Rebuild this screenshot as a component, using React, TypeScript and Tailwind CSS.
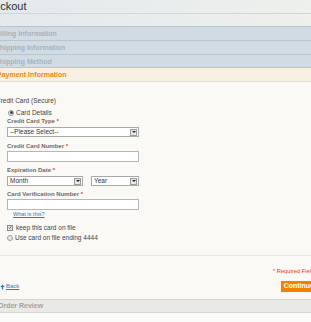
import React from "react";

// ─── Small form pieces ───────────────────────────────────────────────────────

function Label({ text }: { text: string }) {
  return (
    <div className="h-[9px] pl-[7px] text-[6px] font-bold leading-[9px] text-[#6b6b6b]">
      {text} <span className="text-[#eb340a]">*</span>
    </div>
  );
}

function SelectBox({ value, width }: { value: string; width: string }) {
  return (
    <div
      className={`flex h-[10px] items-center justify-between border border-[#a9a9a9] bg-white pl-[2px] pr-[1px] ${width}`}
    >
      <span className="text-[6.5px] leading-none text-[#333]">{value}</span>
      <span className="flex h-[7px] w-[7px] items-center justify-center border border-[#9a9a9a] bg-[#e8e8e8]">
        <span className="h-0 w-0 border-x-[2px] border-t-[2px] border-x-transparent border-t-[#222]" />
      </span>
    </div>
  );
}

function TextBox() {
  return <div className="ml-[7px] h-[11px] w-[132px] border border-[#b6b6b6] bg-white" />;
}

function Radio({ checked }: { checked?: boolean }) {
  return (
    <span className="flex h-[6px] w-[6px] items-center justify-center rounded-full border border-[#9a9a9a] bg-[#e9e9e9]">
      {checked && <span className="h-[3px] w-[3px] rounded-full bg-[#3d4a5a]" />}
    </span>
  );
}

function StepRow({ title, short }: { title: string; short?: boolean }) {
  return (
    <div
      className={`${short ? "h-[13px]" : "h-[14px]"} border-b border-[#b9c5cd] bg-[#d0dbe3] text-[7px] font-bold leading-[13px] text-[#a7b4bd]`}
    >
      <span className="-ml-[5px]">{title}</span>
    </div>
  );
}

// ─── Page ────────────────────────────────────────────────────────────────────

export default function App() {
  return (
    <div
      className="h-[322px] w-[311px] overflow-hidden bg-[#faf9f5]"
      style={{ fontFamily: '"Liberation Sans", Arial, sans-serif' }}
    >
      {/* Heading */}
      <div className="bg-gradient-to-r from-[#e3e9ec] to-[#eef0ec]">
        <div className="h-[14px] border-b border-[#cfd7db] text-[11px] leading-[13px] text-[#2f2f2f]">
          <span className="-ml-[20px]">Checkout</span>
        </div>
        <div className="h-[13px] border-b border-[#b9c5cd]" />
      </div>

      {/* Steps */}
      <StepRow title="Billing Information" />
      <StepRow title="Shipping Information" />
      <StepRow title="Shipping Method" short />
      <div className="h-[14px] border-b border-[#e3ddd2] bg-[#faf0e1] text-[7px] font-bold leading-[13px] text-[#f0841a]">
        <span className="-ml-[3px]">Payment Information</span>
      </div>

      {/* Payment form */}
      <div className="flex flex-col">
        <div className="mt-[14px] h-[9px] text-[6.5px] leading-[9px] text-[#444]">
          <span className="-ml-[4px]">Credit Card (Secure)</span>
        </div>

        <div className="mt-[3px] flex h-[9px] items-center gap-[2px] pl-[8px] text-[6.5px] text-[#444]">
          <Radio checked />
          <span>Card Details</span>
        </div>

        <Label text="Credit Card Type" />
        <div className="mt-[1px] pl-[7px]">
          <SelectBox value="--Please Select--" width="w-[132px]" />
        </div>

        <div className="mt-[5px]">
          <Label text="Credit Card Number" />
        </div>
        <TextBox />

        <div className="mt-[4px]">
          <Label text="Expiration Date" />
        </div>
        <div className="mt-[1px] flex gap-[8px] pl-[7px]">
          <SelectBox value="Month" width="w-[76px]" />
          <SelectBox value="Year" width="w-[48px]" />
        </div>

        <div className="mt-[4px]">
          <Label text="Card Verification Number" />
        </div>
        <TextBox />

        <div className="h-[9px] pl-[13px] text-[5.5px] leading-[9px] text-[#1e7ec8] underline">
          What is this?
        </div>

        <div className="mt-[4px] flex h-[9px] items-center gap-[3px] pl-[7px] text-[6.5px] text-[#444]">
          <span className="flex h-[6px] w-[6px] items-center justify-center border border-[#8a8a8a] bg-[#e9e9e9]">
            <svg viewBox="0 0 6 6" className="h-[5px] w-[5px]">
              <path d="M1 3 L2.5 4.6 L5 1" fill="none" stroke="#2b3442" strokeWidth="1" />
            </svg>
          </span>
          <span>keep this card on file</span>
        </div>

        <div className="mt-[1px] flex h-[9px] items-center gap-[2px] pl-[7px] text-[6.5px] text-[#444]">
          <Radio />
          <span>Use card on file ending 4444</span>
        </div>

        {/* Buttons */}
        <div className="mt-[13px] border-t border-[#e6e4dd]">
          <div className="mt-[11px] flex h-[9px] justify-end text-[5.75px] leading-[9px] text-[#eb340a]">
            <span className="-mr-[6px]">* Required Fields</span>
          </div>
          <div className="mt-[5px] flex h-[11px] items-center justify-between">
            <div className="flex items-center gap-[1px] text-[6px] text-[#1e7ec8]">
              <svg viewBox="0 0 6 7" className="h-[6px] w-[5px]">
                <path d="M3 0.5 L5.6 3.4 L3.8 3.4 L3.8 6.5 L2.2 6.5 L2.2 3.4 L0.4 3.4 Z" fill="#1e7ec8" />
              </svg>
              <span className="underline">Back</span>
            </div>
            <div className="-mr-[6px] flex h-[11px] items-center bg-[#f18200] px-[3px] text-[7px] font-bold text-white">
              Continue
            </div>
          </div>
        </div>
      </div>

      {/* Order review */}
      <div className="mt-[7px] h-[14px] border-y border-[#d4d4d0] bg-[#e9e9e6] text-[7px] font-bold leading-[12px] text-[#a3a3a0]">
        <span className="-ml-[2px]">Order Review</span>
      </div>
      <div className="h-[20px] bg-[#fbfbf9]" />
    </div>
  );
}
